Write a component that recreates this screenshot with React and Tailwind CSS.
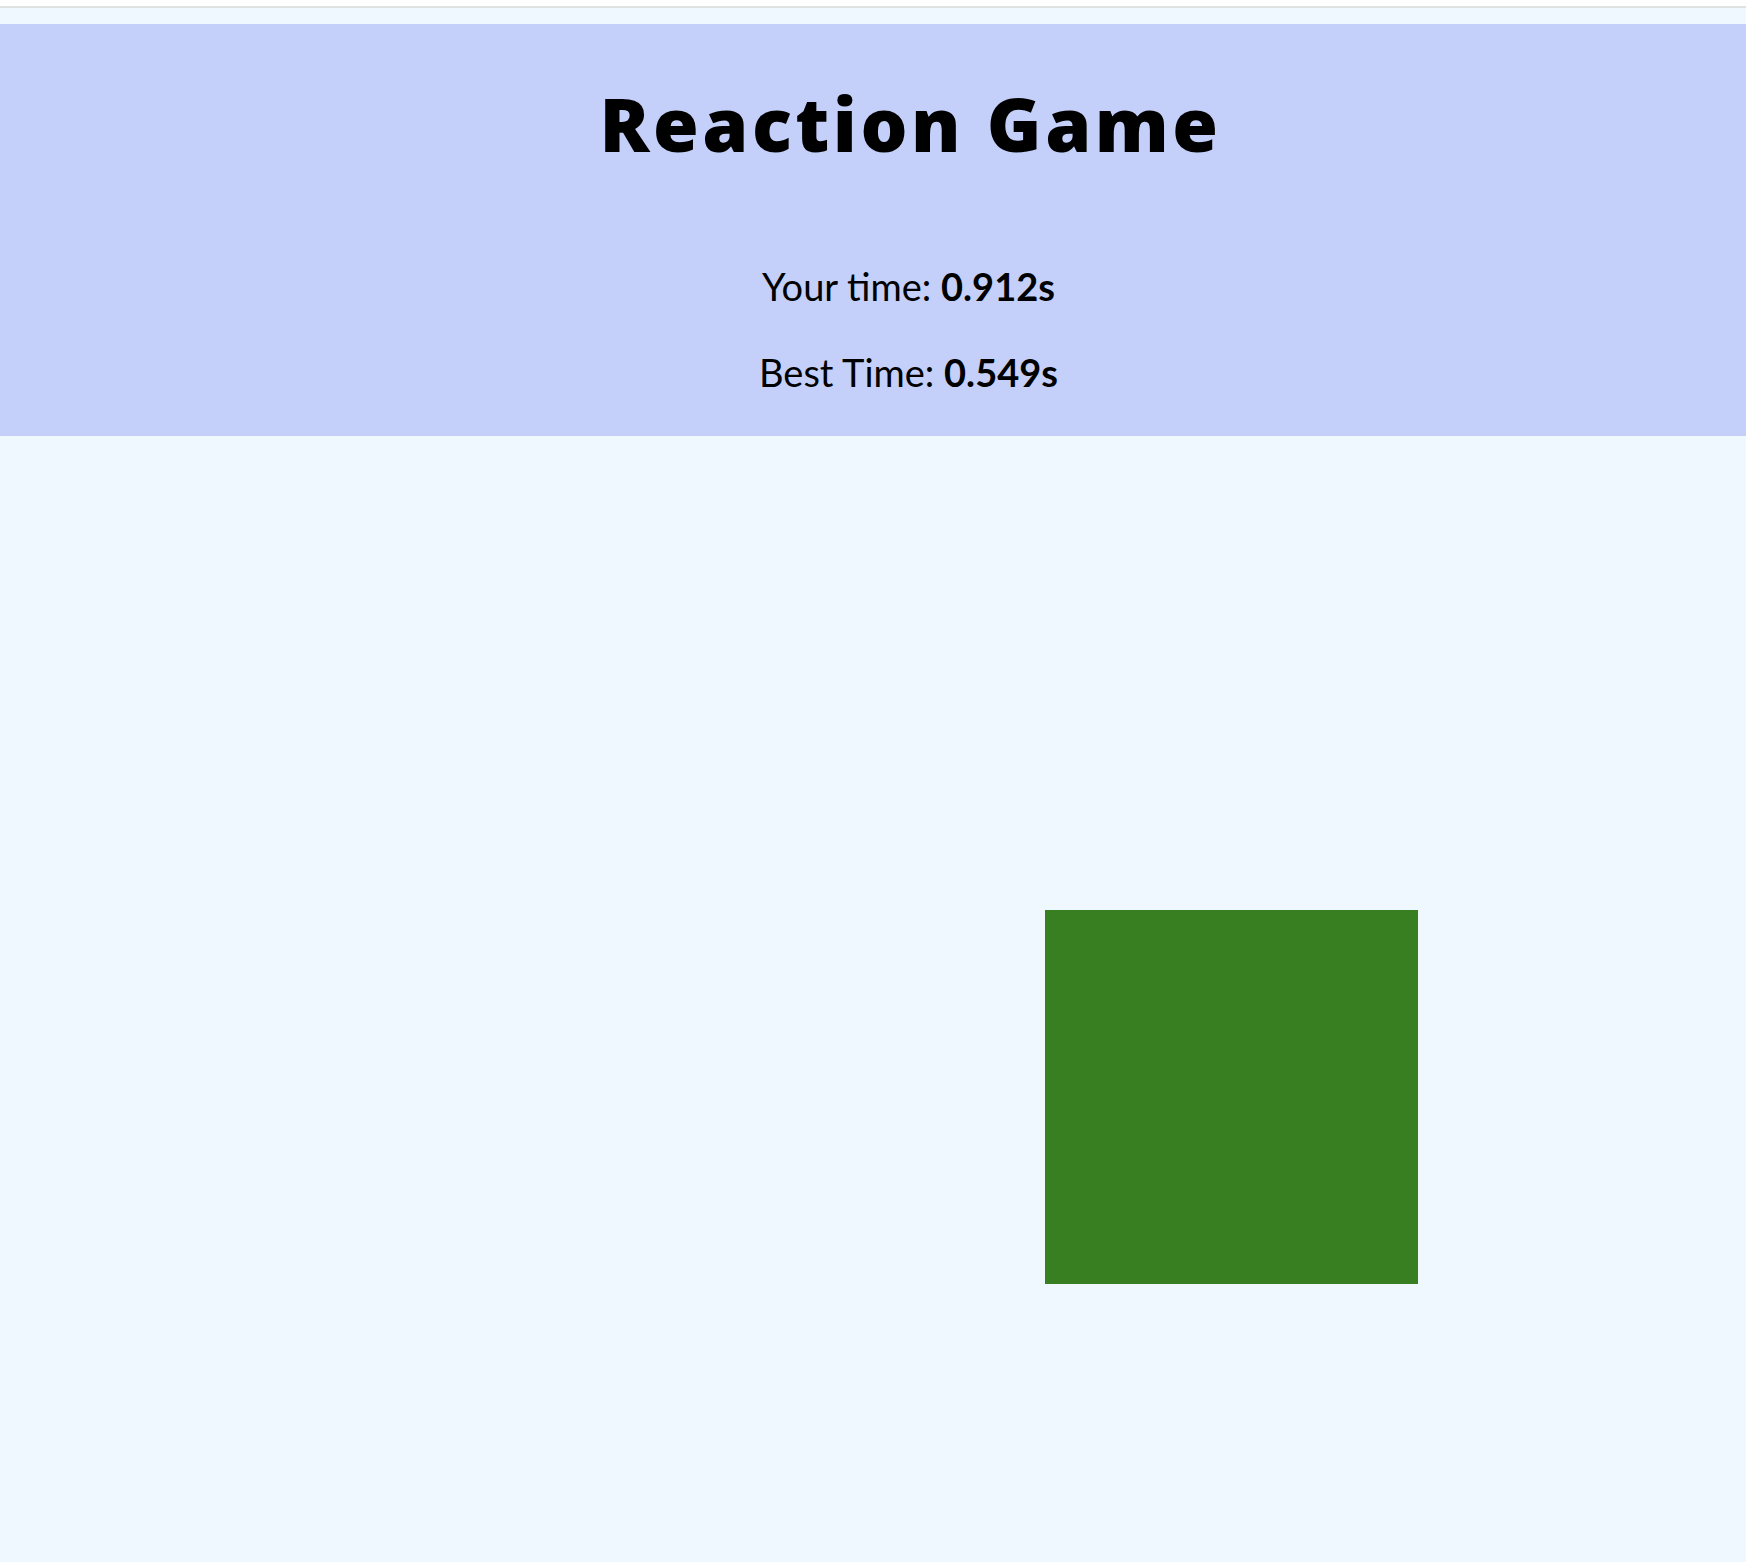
export default function App() {
  const yourTime = 0.912;
  const bestTime = 0.549;

  return (
    <div className="min-h-screen bg-white font-['Lato','Open_Sans',sans-serif] text-black">
      {/* top strip */}
      <div className="h-[6px] bg-white" />
      <div className="h-[2px] bg-[#dfe3e0]" />

      <div className="bg-[#f0f8ff] pt-[16px]">
        {/* Header */}
        <header className="h-[412px] bg-[#c4d0fa] pt-[63px]">
          <div className="flex justify-center">
            <h1 className="pl-[75px] font-['Open_Sans','Lato',sans-serif] text-[74px] font-extrabold leading-none tracking-[3.5px]">
              Reaction Game
            </h1>
          </div>
          <div className="mt-[106px] flex flex-col items-center gap-[48px] pl-[71px] text-[38px] leading-none">
            <p>
              Your time: <b className="font-bold">{yourTime}s</b>
            </p>
            <p>
              Best Time: <b className="font-bold">{bestTime}s</b>
            </p>
          </div>
        </header>

        {/* Game area */}
        <div className="relative h-[1126px]">
          <div className="absolute left-[1045px] top-[474px] h-[374px] w-[373px] bg-[#387f22] cursor-pointer" />
        </div>
      </div>
    </div>
  );
}
